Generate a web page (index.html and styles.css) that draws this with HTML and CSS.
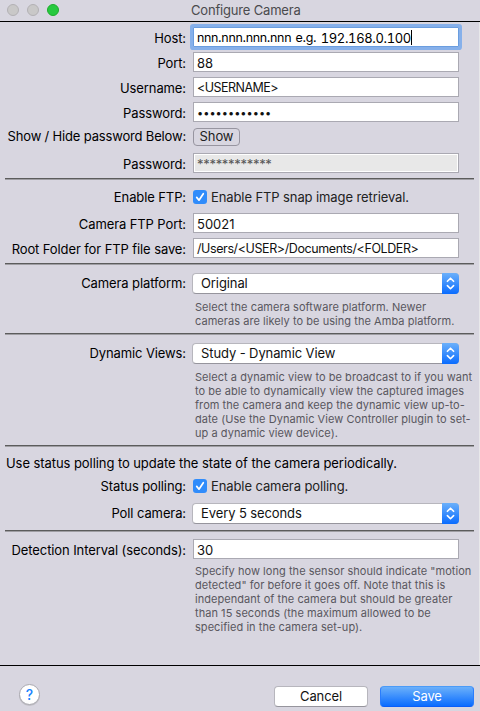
FILE: index.html
```
<!DOCTYPE html>
<html lang="en">
<head>
<meta charset="utf-8">
<title>Configure Camera</title>
<link rel="stylesheet" href="styles.css">
</head>
<body>
<div class="window">
  <header class="titlebar">
    <span class="light"></span><span class="light"></span><span class="light zoom"></span>
    <h1 class="title">Configure Camera</h1>
  </header>
  <main class="form">
    <div class="row"><label class="label">Host:</label><div class="field focus"><span class="t-host">nnn.nnn.nnn.nnn e.g. </span><span class="t-ip">192.168.0.100</span><i class="caret"></i></div></div>
    <div class="row"><label class="label">Port:</label><div class="field">88</div></div>
    <div class="row"><label class="label">Username:</label><div class="field"><span class="t-user">&lt;USERNAME&gt;</span></div></div>
    <div class="row"><label class="label">Password:</label><div class="field"><span class="dots">••••••••••••</span></div></div>
    <div class="row row-show"><label class="label t-showhide">Show / Hide password Below:</label><button class="small-button">Show</button></div>
    <div class="row row-hidden"><label class="label">Password:</label><div class="field disabled"><span class="stars">************</span></div></div>
    <div class="rule"></div>
    <div class="row row-check"><label class="label">Enable FTP:</label><span class="check"><svg viewBox="0 0 14 14"><path d="M3.7 7.4 6 10.2 10.3 3.7"/></svg></span><span class="check-text">Enable FTP snap image retrieval.</span></div>
    <div class="row"><label class="label">Camera FTP Port:</label><div class="field"><span class="t-port">50021</span></div></div>
    <div class="row"><label class="label">Root Folder for FTP file save:</label><div class="field"><span class="t-path">/Users/&lt;USER&gt;/Documents/&lt;FOLDER&gt;</span></div></div>
    <div class="rule"></div>
    <div class="row row-select"><label class="label">Camera platform:</label><div class="select"><span>Original</span><svg class="stepper" viewBox="0 0 17 21"><path d="M5.4 8.3 8.5 5.2l3.1 3.1M5.4 12.6l3.1 3.1 3.1-3.1"/></svg></div></div>
    <p class="help">Select the camera software platform. Newer<br>cameras are likely to be using the Amba platform.</p>
    <div class="rule"></div>
    <div class="row row-select"><label class="label">Dynamic Views:</label><div class="select"><span>Study - Dynamic View</span><svg class="stepper" viewBox="0 0 17 21"><path d="M5.4 8.3 8.5 5.2l3.1 3.1M5.4 12.6l3.1 3.1 3.1-3.1"/></svg></div></div>
    <p class="help">Select a dynamic view to be broadcast to if you want<br>to be able to dynamically view the captured images<br>from the camera and keep the dynamic view up-to-<br>date (Use the Dynamic View Controller plugin to set-<br>up a dynamic view device).</p>
    <div class="rule"></div>
    <p class="note">Use status polling to update the state of the camera periodically.</p>
    <div class="row row-poll"><label class="label">Status polling:</label><span class="check"><svg viewBox="0 0 14 14"><path d="M3.7 7.4 6 10.2 10.3 3.7"/></svg></span><span class="check-text">Enable camera polling.</span></div>
    <div class="row row-select row-every"><label class="label">Poll camera:</label><div class="select"><span>Every 5 seconds</span><svg class="stepper" viewBox="0 0 17 21"><path d="M5.4 8.3 8.5 5.2l3.1 3.1M5.4 12.6l3.1 3.1 3.1-3.1"/></svg></div></div>
    <div class="rule"></div>
    <div class="row row-interval"><label class="label">Detection Interval (seconds):</label><div class="field">30</div></div>
    <p class="help help-last">Specify how long the sensor should indicate "motion<br>detected" for before it goes off. Note that this is<br>independant of the camera but should be greater<br>than 15 seconds (the maximum allowed to be<br>specified in the camera set-up).</p>
  </main>
  <footer class="footer">
    <button class="help-button" aria-label="Help">?</button>
    <button class="button">Cancel</button>
    <button class="button primary">Save</button>
  </footer>
</div>
</body>
</html>
```

FILE: styles.css
```
* { box-sizing: border-box; }
body { margin: 0; background: #d8d6e0; color: #000; font: 13px/16px Inter, "Liberation Sans", sans-serif; letter-spacing: -0.1px; }
.window { width: 480px; height: 711px; display: flex; flex-direction: column; }
button { font: inherit; letter-spacing: inherit; padding: 0; margin: 0; }
p, h1 { margin: 0; }
.titlebar { height: 22px; flex: none; border-bottom: 1px solid #000; padding-left: 7px; display: flex; align-items: center; gap: 8px; }
.light { width: 12px; height: 12px; border-radius: 50%; background: #c9c8c8; border: 1px solid #b3b1b4; margin-top: -1px; }
.zoom { background: #27c93f; border-color: #1dad2b; }
.title { font-size: 13px; font-weight: 400; color: #4a4a4d; margin-left: 124px; margin-top: -1px; letter-spacing: -0.18px; white-space: nowrap; }
.form { height: 643px; flex: none; padding-top: 5px; border-right: 1px solid #e8e8ea; }
.row { display: flex; align-items: center; height: 20px; margin-bottom: 5px; white-space: nowrap; }
.label { width: 186px; margin-right: 7px; text-align: right; flex: none; padding-top: 2px; }
.t-showhide { letter-spacing: -0.17px; }
.field { width: 266px; height: 20px; background: #fff; border: 1px solid #aaa9b2; padding: 2px 0 0 3px; display: flex; align-items: center; color: #111; }
.focus { border-color: #6a9ddf; box-shadow: 0 0 0 3px #86b0ea; border-radius: 1px; color: #000; }
.t-host { white-space: pre; font-size: 12.5px; letter-spacing: -0.35px; word-spacing: 1.2px; }
.t-ip { font-variant-numeric: tabular-nums; letter-spacing: -0.35px; }
.t-user { font-size: 12.5px; letter-spacing: -0.52px; }
.t-path { font-size: 12.5px; letter-spacing: -0.4px; }
.t-port { letter-spacing: 0; }
.dots { letter-spacing: 0; font-size: 11px; }
.stars { letter-spacing: -0.3px; }
.caret { width: 1px; height: 15px; background: #000; margin-top: -2px; }
.disabled { background: #e8e8e8; box-shadow: inset 0 0 0 1px #fff; color: #555; }
.row-show { height: 18px; margin: 6px 0 7px; }
.row-show .label { padding: 0; margin-top: -2px; }
.small-button { width: 47px; height: 18px; border: 1px solid #9795a0; border-radius: 4px; background: transparent; color: #222; line-height: 14px; padding-bottom: 2px; }
.rule { width: 469px; height: 2px; margin: 0 0 0 5px; border-top: 1px solid #5c5c5c; border-bottom: 1px solid #9f9ea3; }
.row-check { height: 14px; margin: 10px 0 9px; }
.row-check .label, .row-poll .label { padding: 0; }
.check { width: 14px; height: 14px; border-radius: 3px; background: #308cfb; }
.check svg { display: block; fill: none; stroke: #fff; stroke-width: 1.7; stroke-linecap: round; stroke-linejoin: round; }
.check-text { margin-left: 4px; color: #222; }
.row-select { height: 21px; margin: 8px 0 0; }
.row-select .label { padding: 0; margin-right: 6px; margin-top: -1px; }
.select { width: 267px; height: 21px; background: #fff; border: 1px solid #b7b6bd; border-bottom-color: #96959d; border-radius: 4px; display: flex; align-items: center; justify-content: space-between; padding-left: 8px; color: #111; }
.select span { margin-top: -1px; }
.stepper { width: 17px; height: 21px; flex: none; margin: -1px -1px -1px 0; border-radius: 0 4px 4px 0; background: linear-gradient(#6bb0fa, #0a6cff); fill: none; stroke: #fff; stroke-width: 1.6; stroke-linecap: round; stroke-linejoin: round; }
.help { margin: 6px 0 5px 195px; font-size: 11px; line-height: 14px; color: #58575e; letter-spacing: 0.05px; white-space: nowrap; }
.help-last { margin-top: 5px; }
.note { margin: 8px 0 0 6px; height: 16px; letter-spacing: -0.07px; white-space: nowrap; }
.row-poll { height: 14px; margin: 8px 0 10px; }
.row-every { margin: 0 0 6px; }
.row-interval { margin: 7px 0 5px; }
.footer { flex: 1; border-top: 1px solid #000; padding: 18px 6px 0 19px; display: flex; align-items: flex-start; gap: 12px; }
.help-button { width: 21px; height: 21px; border-radius: 50%; border: 1px solid #aaa9b0; background: #fff; color: #1783ff; font-size: 14px; font-weight: 500; line-height: 19px; margin-right: auto; box-shadow: 0 1px 0 #c0bfc6; }
.button { width: 94px; height: 21px; margin-top: 2px; border-radius: 4px; border: 1px solid #b7b6bd; border-bottom-color: #96959d; background: #fff; line-height: 19px; color: #111; }
.primary { border-color: #4b9bf8 #2a7dfc #0a5df8; background: linear-gradient(#6bb0fa, #0a6cff); color: #fff; }
```
